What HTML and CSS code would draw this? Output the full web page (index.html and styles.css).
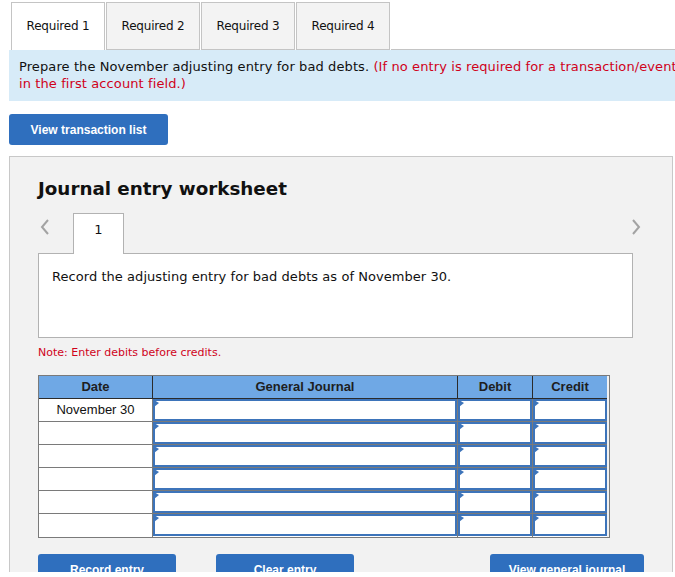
FILE: index.html
```html
<!DOCTYPE html>
<html lang="en">
<head>
  <meta charset="utf-8">
  <meta name="viewport" content="width=device-width, initial-scale=1">
  <title>Journal entry worksheet</title>
  <link rel="stylesheet" href="styles.css">
</head>
<body>
<div class="page">

  <div class="req-tabs">
    <span class="req-tab active">Required 1</span>
    <span class="req-tab">Required 2</span>
    <span class="req-tab">Required 3</span>
    <span class="req-tab">Required 4</span>
    <span class="req-rest"></span>
  </div>

  <div class="prompt">
    Prepare the November adjusting entry for bad debts. <span class="hint">(If no entry is required for a transaction/event, select "No Journal Entry Required"<br>in the first account field.)</span>
  </div>

  <button class="btn btn-list">View transaction list</button>

  <div class="worksheet">
    <h2 class="ws-title">Journal entry worksheet</h2>

    <div class="ws-nav">
      <span class="arrow">
        <svg width="10" height="16" viewBox="0 0 10 16"><polyline points="8,1 2,8 8,15" fill="none" stroke="#a3a3a3" stroke-width="2"/></svg>
      </span>
      <span class="step">1</span>
      <span class="arrow arrow-next">
        <svg width="10" height="16" viewBox="0 0 10 16"><polyline points="2,1 8,8 2,15" fill="none" stroke="#a3a3a3" stroke-width="2"/></svg>
      </span>
    </div>

    <div class="ws-desc">Record the adjusting entry for bad debts as of November 30.</div>

    <div class="note">Note: Enter debits before credits.</div>

    <div class="journal">
      <div class="hd">Date</div>
      <div class="hd">General Journal</div>
      <div class="hd">Debit</div>
      <div class="hd last">Credit</div>

      <div class="cell date">November 30</div>
      <div class="cell"><div class="field"></div></div>
      <div class="cell"><div class="field"></div></div>
      <div class="cell last"><div class="field"></div></div>

      <div class="cell date"></div>
      <div class="cell"><div class="field"></div></div>
      <div class="cell"><div class="field"></div></div>
      <div class="cell last"><div class="field"></div></div>

      <div class="cell date"></div>
      <div class="cell"><div class="field"></div></div>
      <div class="cell"><div class="field"></div></div>
      <div class="cell last"><div class="field"></div></div>

      <div class="cell date"></div>
      <div class="cell"><div class="field"></div></div>
      <div class="cell"><div class="field"></div></div>
      <div class="cell last"><div class="field"></div></div>

      <div class="cell date"></div>
      <div class="cell"><div class="field"></div></div>
      <div class="cell"><div class="field"></div></div>
      <div class="cell last"><div class="field"></div></div>

      <div class="cell date bottom"></div>
      <div class="cell bottom"><div class="field"></div></div>
      <div class="cell bottom"><div class="field"></div></div>
      <div class="cell last bottom"><div class="field"></div></div>
    </div>

    <div class="ws-actions">
      <button class="btn btn-act">Record entry</button>
      <button class="btn btn-act btn-clear">Clear entry</button>
      <button class="btn btn-act btn-journal">View general journal</button>
    </div>
  </div>

</div>
</body>
</html>
```

FILE: styles.css
```css
html,
body {
  margin: 0;
  background: #fff;
}

body {
  font-family: "DejaVu Sans", Verdana, sans-serif;
  color: #111;
  overflow: hidden;
}

.page {
  height: 572px;
  overflow: hidden;
  width: 675px;
}

/* requirement tabs */
.req-tabs {
  display: flex;
  padding: 2px 0 0 11px;
  height: 50px;
  box-sizing: border-box;
}
.req-tab {
  width: 94px;
  height: 48px;
  box-sizing: border-box;
  margin-right: 1px;
  border: 1px solid #c4c4c4;
  background: #f3f3f3;
  font-size: 12px;
  line-height: 46px;
  text-align: center;
  letter-spacing: -0.2px;
}
.req-tab.active {
  background: #fff;
  border-bottom: none;
}
.req-rest {
  flex: 1;
  border-bottom: 1px solid #c4c4c4;
}

.prompt {
  width: 1100px;
  margin-left: 9px;
  background: #d7ebf8;
  padding: 8px 10px 9px;
  box-sizing: border-box;
  font-size: 13px;
  line-height: 17px;
  letter-spacing: 0.1px;
  height: 51px;
  white-space: nowrap;
}
.hint {
  color: #d0021b;
}

.btn {
  display: block;
  border: none;
  border-radius: 3px;
  background: #2f6fbe;
  color: #fff;
  font-family: "Liberation Sans", Arial, sans-serif;
  font-weight: bold;
  font-size: 12px;
  padding: 0;
  height: 31px;
}
.btn-list {
  margin: 13px 0 0 9px;
  width: 159px;
}

/* worksheet panel */
.worksheet {
  margin: 11px 0 0 9px;
  width: 664px;
  height: 460px;
  box-sizing: border-box;
  border: 1px solid #c8c8c8;
  background: #f2f2f2;
  padding: 21px 39px 0 28px;
}
.ws-title {
  margin: 0;
  font-size: 18.3px;
  line-height: 22px;
  font-weight: bold;
  letter-spacing: 0;
}

.ws-nav {
  display: flex;
  align-items: flex-end;
  margin: 12px -10px 0 0;
  height: 41px;
}
.arrow {
  width: 35px;
  align-self: flex-start;
  padding: 7px 0 0 2px;
  box-sizing: border-box;
  line-height: 0;
}
.arrow-next {
  margin-left: auto;
  width: 12px;
  padding-left: 0;
}
.step {
  width: 51px;
  height: 41px;
  box-sizing: border-box;
  border: 1px solid #b2b2b2;
  border-bottom: none;
  background: #fff;
  text-align: center;
  font-size: 13px;
  line-height: 32px;
  position: relative;
  top: 1px;
}

.ws-desc {
  height: 85px;
  box-sizing: border-box;
  border: 1px solid #b2b2b2;
  background: #fff;
  padding: 14px 13px;
  font-size: 13px;
  line-height: 17px;
  letter-spacing: 0.05px;
}

.note {
  color: #d0021b;
  font-size: 11px;
  line-height: 14px;
  margin-top: 8px;
}

/* journal grid */
.journal {
  margin-top: 15px;
  width: 570px;
  display: grid;
  grid-template-columns: 114px 305px 75px 74px;
  grid-auto-rows: 23px;
  border: 1px solid #7a7a7a;
  font-family: "Liberation Sans", Arial, sans-serif;
}
.hd {
  background: #6fa8e5;
  border-right: 1px solid #2b2b2b;
  border-bottom: 1px solid #2b2b2b;
  font-weight: bold;
  font-size: 13px;
  color: #1e1e1e;
  text-align: center;
  line-height: 22px;
}
.hd.last {
  border-right: none;
}
.cell {
  background: #fff;
  border-right: 1px solid #7a7a7a;
  border-bottom: 1px solid #7a7a7a;
}
.cell.last {
  border-right: none;
}
.cell.bottom {
  border-bottom: none;
  height: 23px;
}
.date {
  font-size: 13px;
  text-align: center;
  line-height: 22px;
  color: #111;
}
.field {
  position: relative;
  height: 22px;
  box-sizing: border-box;
  border: 2px solid #3d74ba;
  background: #fff;
}
.field::before {
  content: "";
  position: absolute;
  top: -1px;
  left: -1px;
  border-left: 5px solid #3d74ba;
  border-top: 3px solid transparent;
  border-bottom: 4px solid transparent;
}

.ws-actions {
  display: flex;
  margin: 16px -11px 0 0;
}
.btn-act {
  width: 138px;
  text-align: center;
}
.btn-clear {
  margin-left: 40px;
}
.btn-journal {
  margin-left: auto;
  width: 154px;
}
```
